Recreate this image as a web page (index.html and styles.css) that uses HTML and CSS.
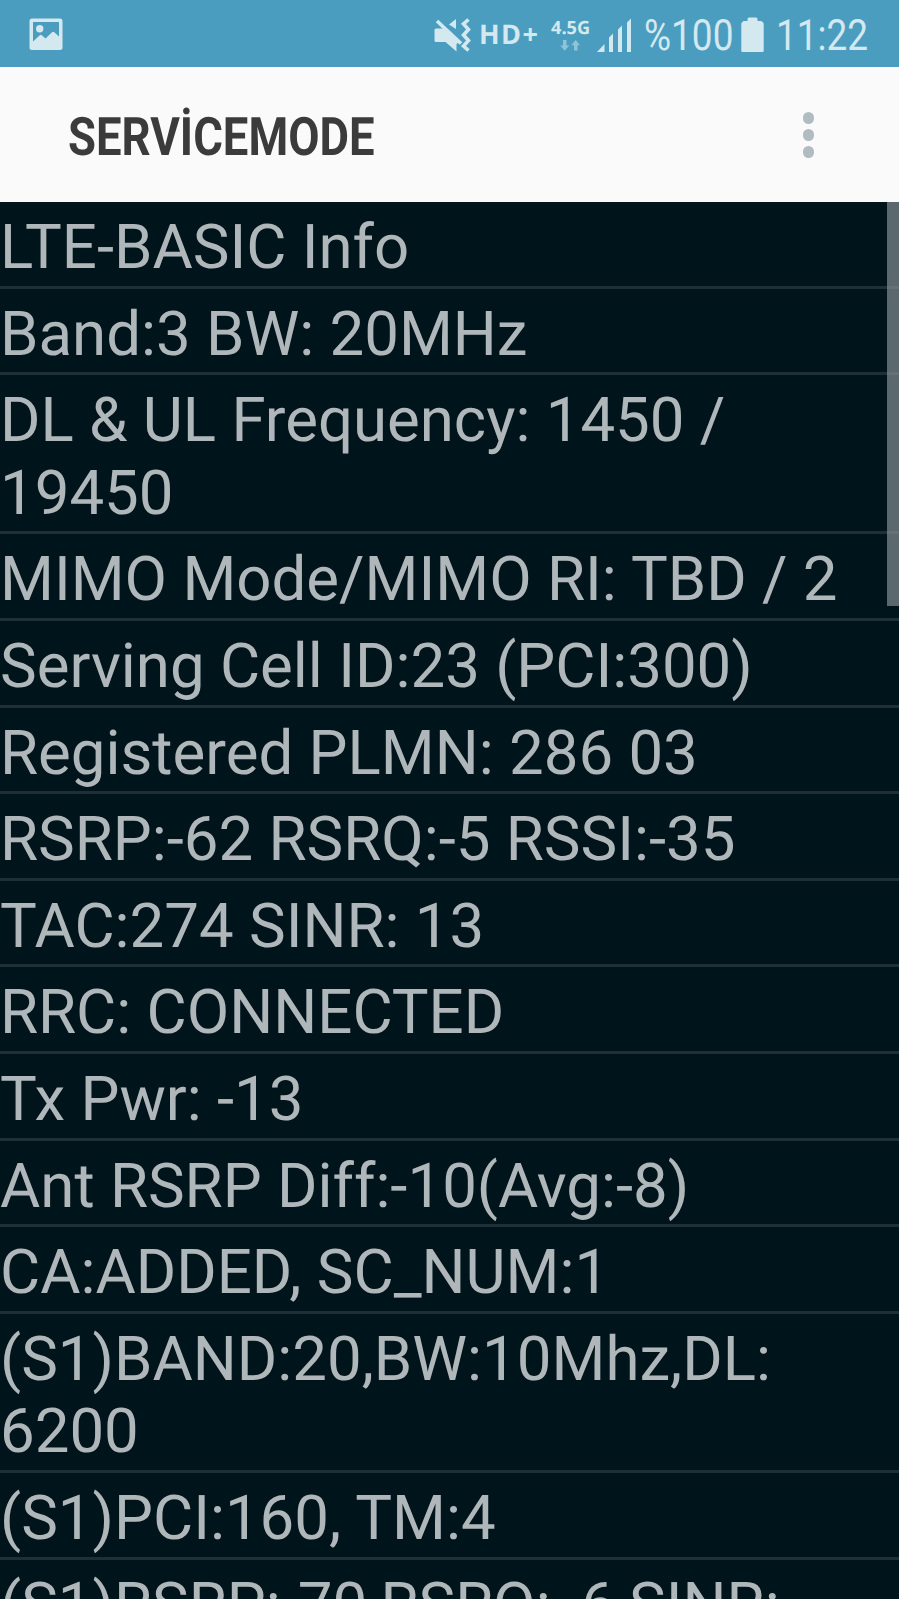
FILE: index.html
```html
<!DOCTYPE html>
<html lang="tr">
<head>
    <meta charset="UTF-8">
    <meta name="viewport" content="width=device-width, initial-scale=1.0">
    <title>ServiceMode</title>
    <link rel="stylesheet" href="styles.css">
</head>
<body>
    <div class="screen">
        <div class="status-bar">
            <svg class="icon-picture" width="34" height="33" viewBox="0 0 34 33">
                <path fill-rule="evenodd" d="M3 0.5H31Q33.500 0.500 33.500 3V29.500Q33.500 32 31 32H3Q0.500 32 0.500 29.500V3Q0.500 0.500 3 0.500ZM4 4V23.500L10.800 17.200Q11.800 16.400 12.800 17.200L16.500 20.500L23 14.200Q24.200 13.300 25.300 14.300L30 18.500V4Z"/>
                <circle cx="10.700" cy="10.700" r="3.700"/>
            </svg>
            <div class="status-right">
                <svg class="icon-mute" width="37" height="35" viewBox="0 0 37 35">
                    <path d="M0.500 12Q0.500 10.500 2 10.500H11L25 24L22.500 26V33.500L11.500 24H2Q0.500 24 0.500 22.500ZM22 1V11L15 6.500Z"/>
                    <path class="stroke" d="M3 3L27 25.500"/>
                    <path class="stroke" d="M34.500 1.500L29.500 6L34.500 11.500L29.500 17L34.500 22.500L29.500 28L34.500 32.500"/>
                </svg>
                <span class="hd">HD+</span>
                <div class="network">
                    <span class="network-type">4.5G</span>
                    <svg class="arrows" width="20" height="11" viewBox="0 0 20 11">
                        <path d="M3 0H6.500V5.500H9.300L4.700 10.800L0.200 5.500H3ZM14 10.500H17.500V5.300H20L15.700 0L11.200 5.300H14Z"/>
                    </svg>
                </div>
                <svg class="icon-signal" width="35" height="35" viewBox="0 0 35 35">
                    <path d="M0 34L7.500 26V34ZM12 19.500L16 15.500V34H12ZM21 11.500L25 7.500V34H21ZM30 4.500L34 0.500V34H30Z"/>
                </svg>
                <div class="battery-level"><span>%100</span></div>
                <svg class="icon-battery" width="23" height="36" viewBox="0 0 23 36">
                    <path d="M6.500 3V1Q6.500 -0.500 8 -0.500H15Q16.500 -0.500 16.500 1V3H20.500L22.700 5.200V33Q22.700 34 21.700 34H1.300Q0.300 34 0.300 33V5.200L2.500 3Z"/>
                </svg>
                <div class="clock"><span>11:22</span></div>
            </div>
        </div>
        <div class="header">
            <h1>SERVİCEMODE</h1>
            <div class="menu">
                <i></i>
                <i></i>
                <i></i>
            </div>
        </div>
        <div class="list">
            <div class="row">LTE-BASIC Info</div>
            <div class="row">Band:3 BW: 20MHz</div>
            <div class="row">DL &amp; UL Frequency: 1450 /<br>19450</div>
            <div class="row">MIMO Mode/MIMO RI: TBD / 2</div>
            <div class="row">Serving Cell ID:23 (PCI:300)</div>
            <div class="row">Registered PLMN: 286 03</div>
            <div class="row">RSRP:-62 RSRQ:-5 RSSI:-35</div>
            <div class="row">TAC:274 SINR: 13</div>
            <div class="row">RRC: CONNECTED</div>
            <div class="row">Tx Pwr: -13</div>
            <div class="row">Ant RSRP Diff:-10(Avg:-8)</div>
            <div class="row">CA:ADDED, SC_NUM:1</div>
            <div class="row">(S1)BAND:20,BW:10Mhz,DL:<br>6200</div>
            <div class="row">(S1)PCI:160, TM:4</div>
            <div class="row">(S1)RSRP:-70 RSRQ: -6 SINR:</div>
            <div class="scrollbar"></div>
        </div>
    </div>
</body>
</html>
```
FILE: styles.css
```css
body {
    margin: 0;
    padding: 0;
    font-family: Roboto, sans-serif;
    background: #00141b;
    text-rendering: geometricPrecision;
}
.screen {
    display: flex;
    flex-direction: column;
    height: 1599px;
    overflow: hidden;
}
.status-bar {
    display: flex;
    justify-content: space-between;
    flex: none;
    height: 67px;
    box-sizing: border-box;
    padding: 18px 32px 0 28.500px;
    background-color: #4a9dbe;
    color: #d4e8f0;
}
.status-bar svg {
    display: block;
    flex: none;
    overflow: visible;
    fill: #d4e8f0;
}
.status-right {
    display: flex;
    align-items: flex-start;
}
.icon-mute .stroke {
    fill: none;
    stroke: #d4e8f0;
    stroke-width: 3.6px;
}
.hd {
    width: 80px;
    padding-left: 8px;
    box-sizing: border-box;
    font: bold 27px/32px "Open Sans", sans-serif;
    letter-spacing: 1.4px;
}
.network {
    width: 46px;
}
.network-type {
    display: block;
    font: bold 18.200px/20px "Open Sans", sans-serif;
}
.status-bar .arrows {
    margin: 2px 0 0 9px;
    fill: #8fc3d8;
}
.battery-level,
.clock {
    font-size: 43px;
    line-height: 37px;
    white-space: nowrap;
}
.battery-level {
    width: 97px;
    margin-left: 12px;
}
.clock {
    width: 91px;
    margin-left: 12px;
}
.battery-level span,
.clock span {
    display: inline-block;
    transform: scaleX(0.86);
    transform-origin: left;
}
.header {
    display: flex;
    align-items: center;
    justify-content: space-between;
    flex: none;
    height: 135px;
    box-sizing: border-box;
    padding: 1px 85px 0 68px;
    background-color: #fafafa;
}
.header h1 {
    margin: 3px 0 0;
    font-size: 53px;
    line-height: 62px;
    color: #3b3b3b;
    transform: scaleX(0.857);
    transform-origin: left;
}
.menu {
    display: flex;
    flex-direction: column;
    gap: 5.500px;
}
.menu i {
    width: 11.500px;
    height: 11.500px;
    border-radius: 50%;
    background-color: #b0bcc2;
}
.list {
    position: relative;
    flex: 1;
    overflow: hidden;
}
.row {
    padding: 10px 0 1px;
    border-bottom: 3px solid #1e2f37;
    font-size: 61.750px;
    line-height: 72.600px;
    color: #b0b7ba;
    white-space: nowrap;
}
.row:nth-child(15) {
    word-spacing: -2px;
}
.scrollbar {
    position: absolute;
    top: 0;
    right: 0;
    width: 12px;
    height: 404px;
    background-color: rgba(134, 145, 150, 0.68);
}
```
